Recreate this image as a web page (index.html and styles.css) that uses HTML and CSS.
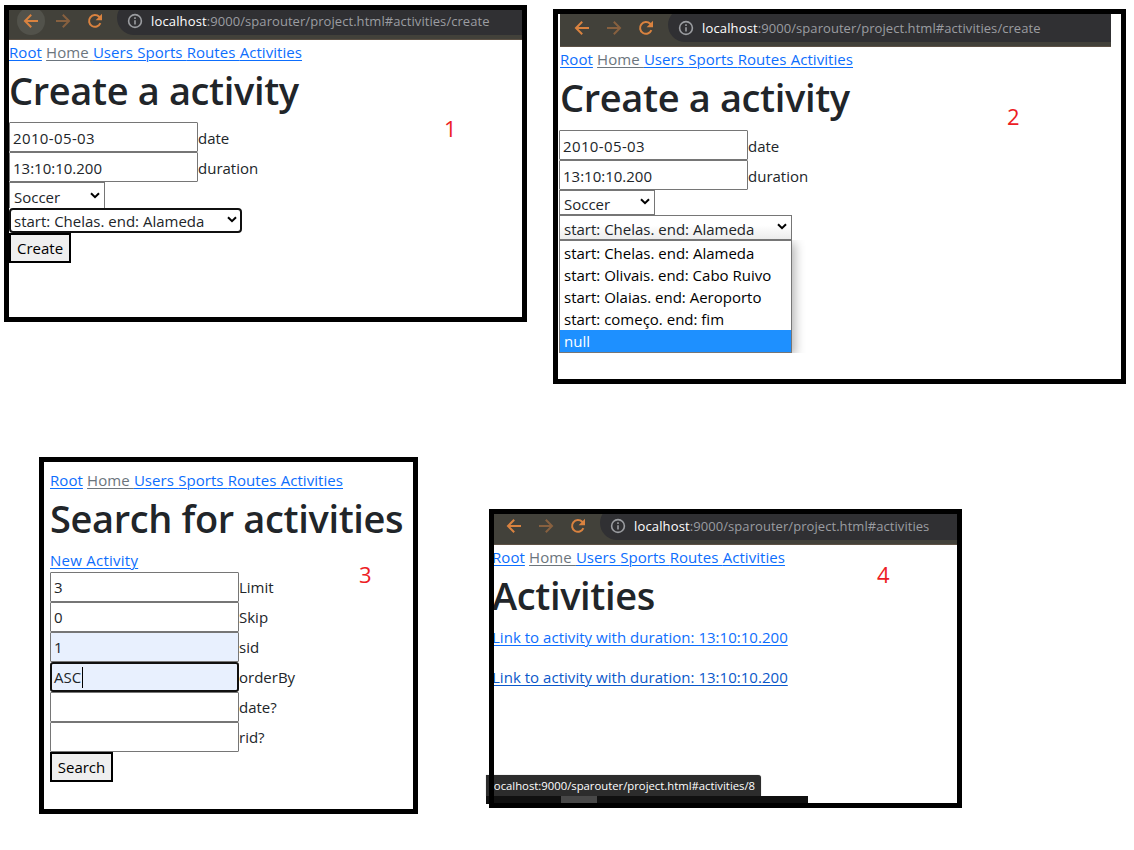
FILE: index.html
```
<!DOCTYPE html>
<html lang="en">
<head>
<meta charset="utf-8">
<title>Activities</title>
<link rel="stylesheet" href="styles.css">
</head>
<body>
<svg class="defs" aria-hidden="true">
  <symbol id="back" viewBox="0 0 16 16"><path d="M15 8H2.2M8.2 1.8L2 8l6.2 6.2"/></symbol>
  <symbol id="forward" viewBox="0 0 16 16"><path d="M1 8h12.8M7.8 1.8L14 8l-6.2 6.2"/></symbol>
  <symbol id="reload" viewBox="0 0 16 16"><path d="M13.4 10.2A5.9 5.9 0 1 1 12.2 3.8L14 5.6"/><path class="solid" d="M15 .8v6.4H8.6z"/></symbol>
  <symbol id="info" viewBox="0 0 16 16"><circle cx="8" cy="8" r="6.4"/><path d="M8 7.2v4.2M8 4.3v1.7"/></symbol>
  <symbol id="chevron" viewBox="0 0 10 7"><path d="M1 1.2l4 4 4-4"/></symbol>
</svg>

<main class="board">
  <section class="row">
    <article class="panel create">
      <header class="toolbar">
        <span class="tool active"><svg><use href="#back"/></svg></span>
        <span class="tool dim"><svg><use href="#forward"/></svg></span>
        <span class="tool"><svg><use href="#reload"/></svg></span>
        <div class="address"><svg><use href="#info"/></svg><span><b>localhost</b>:9000/sparouter/project.html#activities/create</span></div>
      </header>
      <nav class="links"><a>Root</a> <a class="muted">Home </a><a>Users </a><a>Sports </a><a>Routes </a><a>Activities</a></nav>
      <h1>Create a activity</h1>
      <div class="field"><span class="input digits">2010-05-03</span><label>date</label></div>
      <div class="field"><span class="input">13:10:10.200</span><label>duration</label></div>
      <div class="select sport">Soccer<svg><use href="#chevron"/></svg></div>
      <div class="select route focused">start: Chelas. end: Alameda<svg><use href="#chevron"/></svg></div>
      <button class="button">Create</button>
      <span class="number">1</span>
    </article>

    <article class="panel create-open">
      <header class="toolbar">
        <span class="tool"><svg><use href="#back"/></svg></span>
        <span class="tool dim"><svg><use href="#forward"/></svg></span>
        <span class="tool"><svg><use href="#reload"/></svg></span>
        <div class="address"><svg><use href="#info"/></svg><span><b>localhost</b>:9000/sparouter/project.html#activities/create</span></div>
      </header>
      <nav class="links"><a>Root</a> <a class="muted">Home </a><a>Users </a><a>Sports </a><a>Routes </a><a>Activities</a></nav>
      <h1>Create a activity</h1>
      <div class="field"><span class="input digits">2010-05-03</span><label>date</label></div>
      <div class="field"><span class="input">13:10:10.200</span><label>duration</label></div>
      <div class="select sport">Soccer<svg><use href="#chevron"/></svg></div>
      <div class="select route open">start: Chelas. end: Alameda<svg><use href="#chevron"/></svg></div>
      <div class="options-clip">
        <ul class="options">
          <li>start: Chelas. end: Alameda</li>
          <li>start: Olivais. end: Cabo Ruivo</li>
          <li>start: Olaias. end: Aeroporto</li>
          <li>start: começo. end: fim</li>
          <li class="selected">null</li>
        </ul>
      </div>
      <span class="number">2</span>
    </article>
  </section>

  <section class="row">
    <article class="panel search">
      <nav class="links"><a>Root</a> <a class="muted">Home </a><a>Users </a><a>Sports </a><a>Routes </a><a>Activities</a></nav>
      <h1>Search for activities</h1>
      <div class="new"><a>New Activity</a></div>
      <div class="field"><span class="input">3</span><label>Limit</label></div>
      <div class="field"><span class="input">0</span><label>Skip</label></div>
      <div class="field"><span class="input filled">1</span><label>sid</label></div>
      <div class="field"><span class="input filled focused">ASC<i class="caret"></i></span><label>orderBy</label></div>
      <div class="field"><span class="input"></span><label>date?</label></div>
      <div class="field"><span class="input"></span><label>rid?</label></div>
      <button class="button">Search</button>
      <span class="number">3</span>
    </article>

    <article class="panel list">
      <header class="toolbar">
        <span class="tool"><svg><use href="#back"/></svg></span>
        <span class="tool dim"><svg><use href="#forward"/></svg></span>
        <span class="tool"><svg><use href="#reload"/></svg></span>
        <div class="address"><svg><use href="#info"/></svg><span><b>localhost</b>:9000/sparouter/project.html#activities</span></div>
      </header>
      <nav class="links"><a>Root</a> <a class="muted">Home </a><a>Users </a><a>Sports </a><a>Routes </a><a>Activities</a></nav>
      <h1>Activities</h1>
      <p><a>Link to activity with duration: 13:10:10.200</a></p>
      <p><a class="hovered">Link to activity with duration: 13:10:10.200</a></p>
      <div class="status"><span class="status-text">localhost:9000/sparouter/project.html#activities/8</span><span class="strip"><i></i></span></div>
      <span class="number">4</span>
    </article>
  </section>
</main>
</body>
</html>
```
FILE: styles.css
```
* { box-sizing: border-box; }
body {
  margin: 0;
  background: #fff;
  color: #212529;
  font: 15px/24px "Open Sans", "Noto Sans", sans-serif;
}
.defs { position: absolute; width: 0; height: 0; }
svg { fill: none; stroke: currentColor; stroke-width: 2; flex: none; }
.solid { fill: currentColor; stroke: none; }

.board { width: 1134px; height: 850px; overflow: hidden; }
.row { display: flex; align-items: flex-start; }
.panel {
  position: relative;
  display: flex;
  flex-direction: column;
  align-items: flex-start;
  border: 5px solid #000;
  white-space: nowrap;
}
.create { width: 523px; height: 317px; margin: 5px 0 0 4px; }
.create-open { width: 573px; height: 375px; margin: 9px 0 0 26px; padding-left: 2px; }
.search { width: 379px; height: 357px; margin: 73px 0 0 39px; padding: 6px 0 0 6px; }
.list { width: 473px; height: 299px; margin: 125px 0 0 71px; }

/* Browser toolbar */
.toolbar {
  display: flex;
  align-self: stretch;
  height: 30px;
  padding-left: 8px;
  background: #42413a;
  border-bottom: 1px solid #5d5145;
  color: #d9823f;
  overflow: hidden;
}
.tool {
  display: flex;
  align-items: center;
  justify-content: center;
  width: 28px;
  height: 28px;
  margin: -3px 4px 0 0;
  border-radius: 50%;
}
.tool svg { width: 16px; height: 16px; }
.tool.active { background: #52524b; }
.tool.dim { color: #87603f; }
.address {
  display: flex;
  align-items: center;
  flex: 1;
  height: 34px;
  margin: -9px 0 0 4px;
  padding: 6px 0 0 10px;
  border-radius: 17px 0 0 17px;
  background: #303033;
  color: #9b9da1;
  font-size: 13px;
  line-height: 20px;
  letter-spacing: 0.06px;
}
.address svg { width: 16px; height: 16px; margin-right: 8px; stroke-width: 1.6; }
.address b { font-weight: 400; color: #fff; letter-spacing: 0.15px; }
.create-open .toolbar { width: 551px; height: 33px; align-self: flex-start; }
.create-open .tool { margin-top: 0; }
.create-open .address { height: 34px; margin-top: -6px; }
.list .toolbar { height: 31px; padding-left: 6px; }
.list .tool { margin-top: -2px; }
.list .address { margin-top: -8px; }

/* Page content */
a { color: #0d6efd; text-decoration: underline; text-underline-offset: 2px; text-decoration-thickness: 1px; }
a.muted { color: #6c757d; }
a.hovered { color: #0a58ca; }
.links { height: 24px; letter-spacing: 0.06px; word-spacing: 0.2px; white-space: pre; margin-top: 0; }
h1 {
  height: 48px;
  margin: 2px 0 8px;
  font-size: 38px;
  line-height: 48px;
  font-weight: 600;
  letter-spacing: -0.36px;
}
.create-open h1 { margin-bottom: 9px; }
.search h1 { margin-bottom: 6px; }
.list h1 { margin-bottom: 6px; }
.new { height: 24px; letter-spacing: 0.25px; }
.list p { margin: 0 0 16px; letter-spacing: 0.03px; }
.list .links, .list h1, .list p { margin-left: -2px; }

.field { display: flex; height: 30px; }
.field label { line-height: 32px; }
.search .field label { line-height: 30px; }
.input {
  display: flex;
  align-items: center;
  width: 189px;
  height: 30px;
  padding: 2px 0 0 3px;
  border: 1px solid #767676;
  border-radius: 1px;
  background: #fff;
}
.search .input { padding-top: 0; }
.digits { letter-spacing: 0.37px; }
.input.filled { background: #e8f0fe; }
.search .input.focused { border: 2px solid #101010; border-radius: 3px; padding: 0 0 0 2px; }
.caret { width: 1px; height: 21px; margin-left: 1px; background: #000; }

.select {
  display: flex;
  align-items: center;
  justify-content: space-between;
  height: 25px;
  padding: 2px 4px 0 4px;
  border: 1px solid #767676;
  background: #fff;
}
.select svg { width: 10px; height: 7px; margin-top: -4px; color: #000; }
.create .sport { height: 26px; border-bottom: 0; }
.create .sport svg { margin-top: -2px; }
.sport { width: 96px; }
.route { width: 233px; }
.route.focused { border: 2px solid #101010; border-radius: 4px; padding: 1px 3px 0 3px; }
.route.open { background: linear-gradient(#fff 40%, #ececec); }
.create-open .field, .create-open .select, .create-open .options-clip { margin-left: -1px; }
.options-clip { width: 250px; height: 113px; overflow: hidden; }
.options {
  width: 233px;
  height: 113px;
  margin: 0;
  padding: 1px 0 0;
  list-style: none;
  border: 1px solid #767676;
  background: #fff;
  color: #000;
  box-shadow: 3px 3px 10px rgba(0, 0, 0, 0.3);
}
.options li { height: 22px; padding-left: 4px; line-height: 23px; }
.options .selected { background: #1e90ff; color: #fff; }

.button {
  height: 30px;
  padding: 0 6px;
  border: 2px solid #000;
  background: #efefef;
  color: #000;
  font: inherit;
}
.create .button { width: 62px; }
.search .button { width: 63px; padding: 0 5px; }

/* Link preview that overhangs the left frame */
.list { border-color: transparent; }
.list::after { content: ""; position: absolute; inset: -5px; border: 5px solid #000; }
.status { position: absolute; left: -8px; top: 261px; width: 322px; }
.status-text {
  display: block;
  width: 275px;
  height: 21px;
  padding-left: 5px;
  border-radius: 0 3px 0 0;
  background: #2c2c2c;
  box-shadow: 0 0 1px #777;
  color: #fff;
  font-size: 11.3px;
  line-height: 21px;
}
.strip { display: block; height: 8px; padding-left: 75px; background: #101010; }
.strip i { display: block; width: 36px; height: 8px; background: #484848; }

/* Figure numbers over the panels */
.number { position: absolute; color: #ed1c24; font-size: 22px; line-height: 30px; }
.create .number { left: 435px; top: 103px; }
.create-open .number { left: 449px; top: 87px; }
.search .number { left: 315px; top: 97px; }
.list .number { left: 383px; top: 45px; }
```
